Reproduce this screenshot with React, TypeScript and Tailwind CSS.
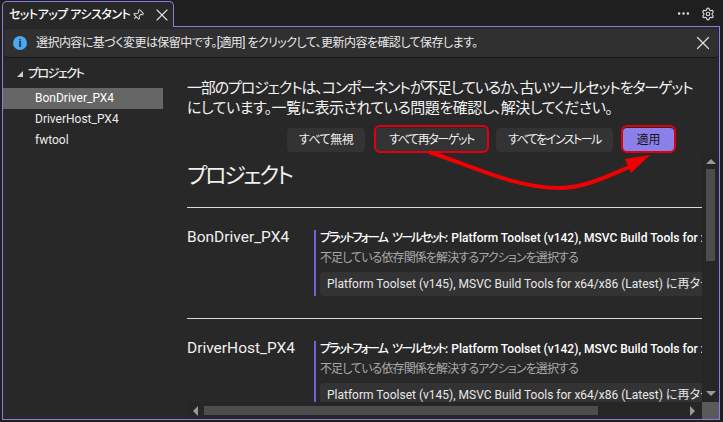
import React from "react";
import { Pin, X, Settings, MoreHorizontal } from "lucide-react";

const font = { fontFamily: 'Roboto,"Noto Sans CJK JP",sans-serif' };

function Section({ name, last }: { name: string; last?: boolean }) {
  return (
    <div className={`flex border-t border-[#d8d8d8] pt-[22px] ${last ? "min-h-0 flex-1 overflow-hidden" : "h-[111px] shrink-0"}`}>
      <div className="w-[127px] shrink-0 text-[15.5px] leading-[14px] text-[#f0f0f0]">{name}</div>
      <div className="flex min-w-0 flex-1 h-[66px] shrink-0 border-l-2 border-[#6f63d8] pl-1">
        <div className="min-w-0 flex-1 overflow-hidden whitespace-nowrap">
          <div className="h-[21px] text-[12px] font-medium leading-[16px] text-white">
            <span className="tracking-[-1.9px] [word-spacing:4px]">プラットフォーム ツールセット: </span>Platform Toolset (v142), MSVC Build Tools for x64/x86
          </div>
          <div className="h-[21px] text-[12px] leading-[14px] tracking-[-0.9px] text-[#a8a8a8]">不足している依存関係を解決するアクションを選択する</div>
          <div className="h-[24px] rounded-l-[4px] bg-[#333333] pl-[7px] text-[12px] leading-[24px] text-[#e8e8e8]">
            Platform Toolset (v145), MSVC Build Tools for x64/x86 (Latest) に再ターゲットする
          </div>
        </div>
      </div>
    </div>
  );
}

export default function App() {
  return (
    <div style={font} className="relative flex h-[422px] w-[723px] flex-col overflow-hidden bg-[#1f1f1f] text-white [font-feature-settings:'palt']">
      <div className="flex h-[27px] shrink-0 pt-px pl-[2px]">
        <div className="flex w-[172px] shrink-0 items-center whitespace-nowrap rounded-t-[5px] border border-b-0 border-[#8a7ee0] bg-[#282828] pl-[6px]">
          <span className="w-[111px] text-[12px] font-medium leading-none tracking-[-0.5px] text-white">セットアップ アシスタント</span>
          <Pin size={12} className="ml-[12px] rotate-45 text-[#d8d8d8]" />
          <X size={20} strokeWidth={1.3} className="ml-[8px] text-[#e0e0e0]" />
        </div>
        <div className="mr-[3px] flex flex-1 items-center justify-end gap-[10px] border-b border-[#8a7ee0] pr-[5px]">
          <MoreHorizontal size={15} className="text-[#e0e0e0]" />
          <Settings size={14} className="text-[#d8d8d8]" />
        </div>
      </div>
      <div className="mb-[2px] ml-[2px] mr-[3px] flex min-h-0 flex-1 flex-col border border-t-0 border-[#8a7ee0] bg-[#282828]">
        <div className="mx-px mt-[2px] flex h-[29px] shrink-0 items-center rounded-[4px] border-b border-[#161616] bg-[#303030] pl-[9px] pr-[4px]">
          <span className="flex h-[14px] w-[14px] items-center justify-center rounded-full bg-[#4aa8f0] text-[10px] font-bold text-[#1f1f1f]">i</span>
          <span className="ml-[9px] flex-1 text-[12px] leading-none tracking-[-0.55px] text-[#e8e8e8]">選択内容に基づく変更は保留中です。[適用] をクリックして、更新内容を確認して保存します。</span>
          <X size={22} strokeWidth={1.3} className="text-[#e0e0e0]" />
        </div>
        <div className="flex min-h-0 flex-1">
          <div className="w-[160px] shrink-0 pt-[5px] text-[12px] text-[#ececec]">
            <div className="flex h-[21px] items-center pl-[14px] font-medium leading-none tracking-[-1.5px]">
              <span className="mr-[5px] h-0 w-0 border-b-[6px] border-l-[6px] border-b-[#d0d0d0] border-l-transparent" />
              プロジェクト
            </div>
            <div className="mt-[4px] h-[21px] bg-[#666666] pl-[32px] leading-[21px] text-white">BonDriver_PX4</div>
            <div className="h-[21px] pl-[32px] leading-[21px]">DriverHost_PX4</div>
            <div className="h-[21px] pl-[32px] leading-[21px]">fwtool</div>
          </div>
          <div className="flex min-w-0 flex-1 flex-col pl-[24px]">
            <div className="overflow-hidden whitespace-nowrap pt-[20px] text-[15px] leading-[20px] text-[#f2f2f2]">
              <span className="tracking-[-1.15px]">一部のプロジェクトは、コンポーネントが不足しているか、古いツールセットをターゲット</span><br />
              <span className="tracking-[-0.5px]">にしています。一覧に表示されている問題を確認し、解決してください。</span>
            </div>
            <div className="mt-[10px] flex shrink-0 pl-[100px] text-[12px] text-[#f0f0f0]">
              <div className="flex h-[24px] w-[78px] items-center justify-center rounded-[4px] bg-[#333333] tracking-[-0.5px]">すべて無視</div>
              <div className="ml-[11px] flex h-[24px] w-[111px] items-center justify-center rounded-[4px] bg-[#333333] tracking-[-1.4px]">すべて再ターゲット</div>
              <div className="ml-[9px] flex h-[24px] w-[117px] items-center justify-center rounded-[4px] bg-[#333333] tracking-[-1.5px]">すべてをインストール</div>
              <div className="ml-[10px] flex h-[24px] w-[51px] items-center justify-center rounded-[4px] bg-[#8b80ea] text-[#141414]">適用</div>
            </div>
            <div className="relative mt-px flex min-h-0 flex-1">
              <div className="flex min-w-0 flex-1 flex-col overflow-hidden">
                <div className="h-[54px] shrink-0 pt-[7px] text-[22px] leading-[32px] tracking-[-2.2px] text-[#f0f0f0]">プロジェクト</div>
                <Section name="BonDriver_PX4" />
                <Section name="DriverHost_PX4" last />
                <div className="flex h-[17px] shrink-0 items-center bg-[#262626]">
                  <span className="ml-[6px] h-0 w-0 border-y-[5px] border-r-[5px] border-y-transparent border-r-[#9a9a9a]" />
                  <div className="ml-[6px] h-[9px] w-[394px] bg-[#4d4d4d]" />
                  <span className="ml-[92px] h-0 w-0 border-y-[5px] border-l-[5px] border-y-transparent border-l-[#9a9a9a]" />
                </div>
              </div>
              <div className="flex w-[17px] shrink-0 flex-col">
                <div className="flex flex-1 flex-col items-center bg-[#262626] pt-[6px]">
                  <span className="h-0 w-0 border-x-[5px] border-b-[5px] border-x-transparent border-b-[#9a9a9a]" />
                  <div className="mt-[5px] h-[92px] w-[9px] bg-[#4d4d4d]" />
                  <span className="mb-[6px] mt-auto h-0 w-0 border-x-[5px] border-t-[5px] border-x-transparent border-t-[#9a9a9a]" />
                </div>
                <div className="h-[17px] bg-[#5a5a5a]" />
              </div>
            </div>
          </div>
        </div>
      </div>
      {/* red annotations over the page */}
      <div className="absolute left-[374px] top-[125px] h-[28px] w-[115px] rounded-[6px] border-2 border-[#e00010]" />
      <div className="absolute left-[621px] top-[125px] h-[28px] w-[55px] rounded-[6px] border-2 border-[#e00010]" />
      <svg className="absolute left-[420px] top-[145px]" width="240" height="50" viewBox="0 0 240 50">
        <path d="M9 7 C55 22 95 43 140 43 C165 43 190 30 212 21" fill="none" stroke="#f00000" strokeWidth="4" />
        <path d="M230 10 L205 14 L211 28 Z" fill="#f00000" />
      </svg>
    </div>
  );
}
